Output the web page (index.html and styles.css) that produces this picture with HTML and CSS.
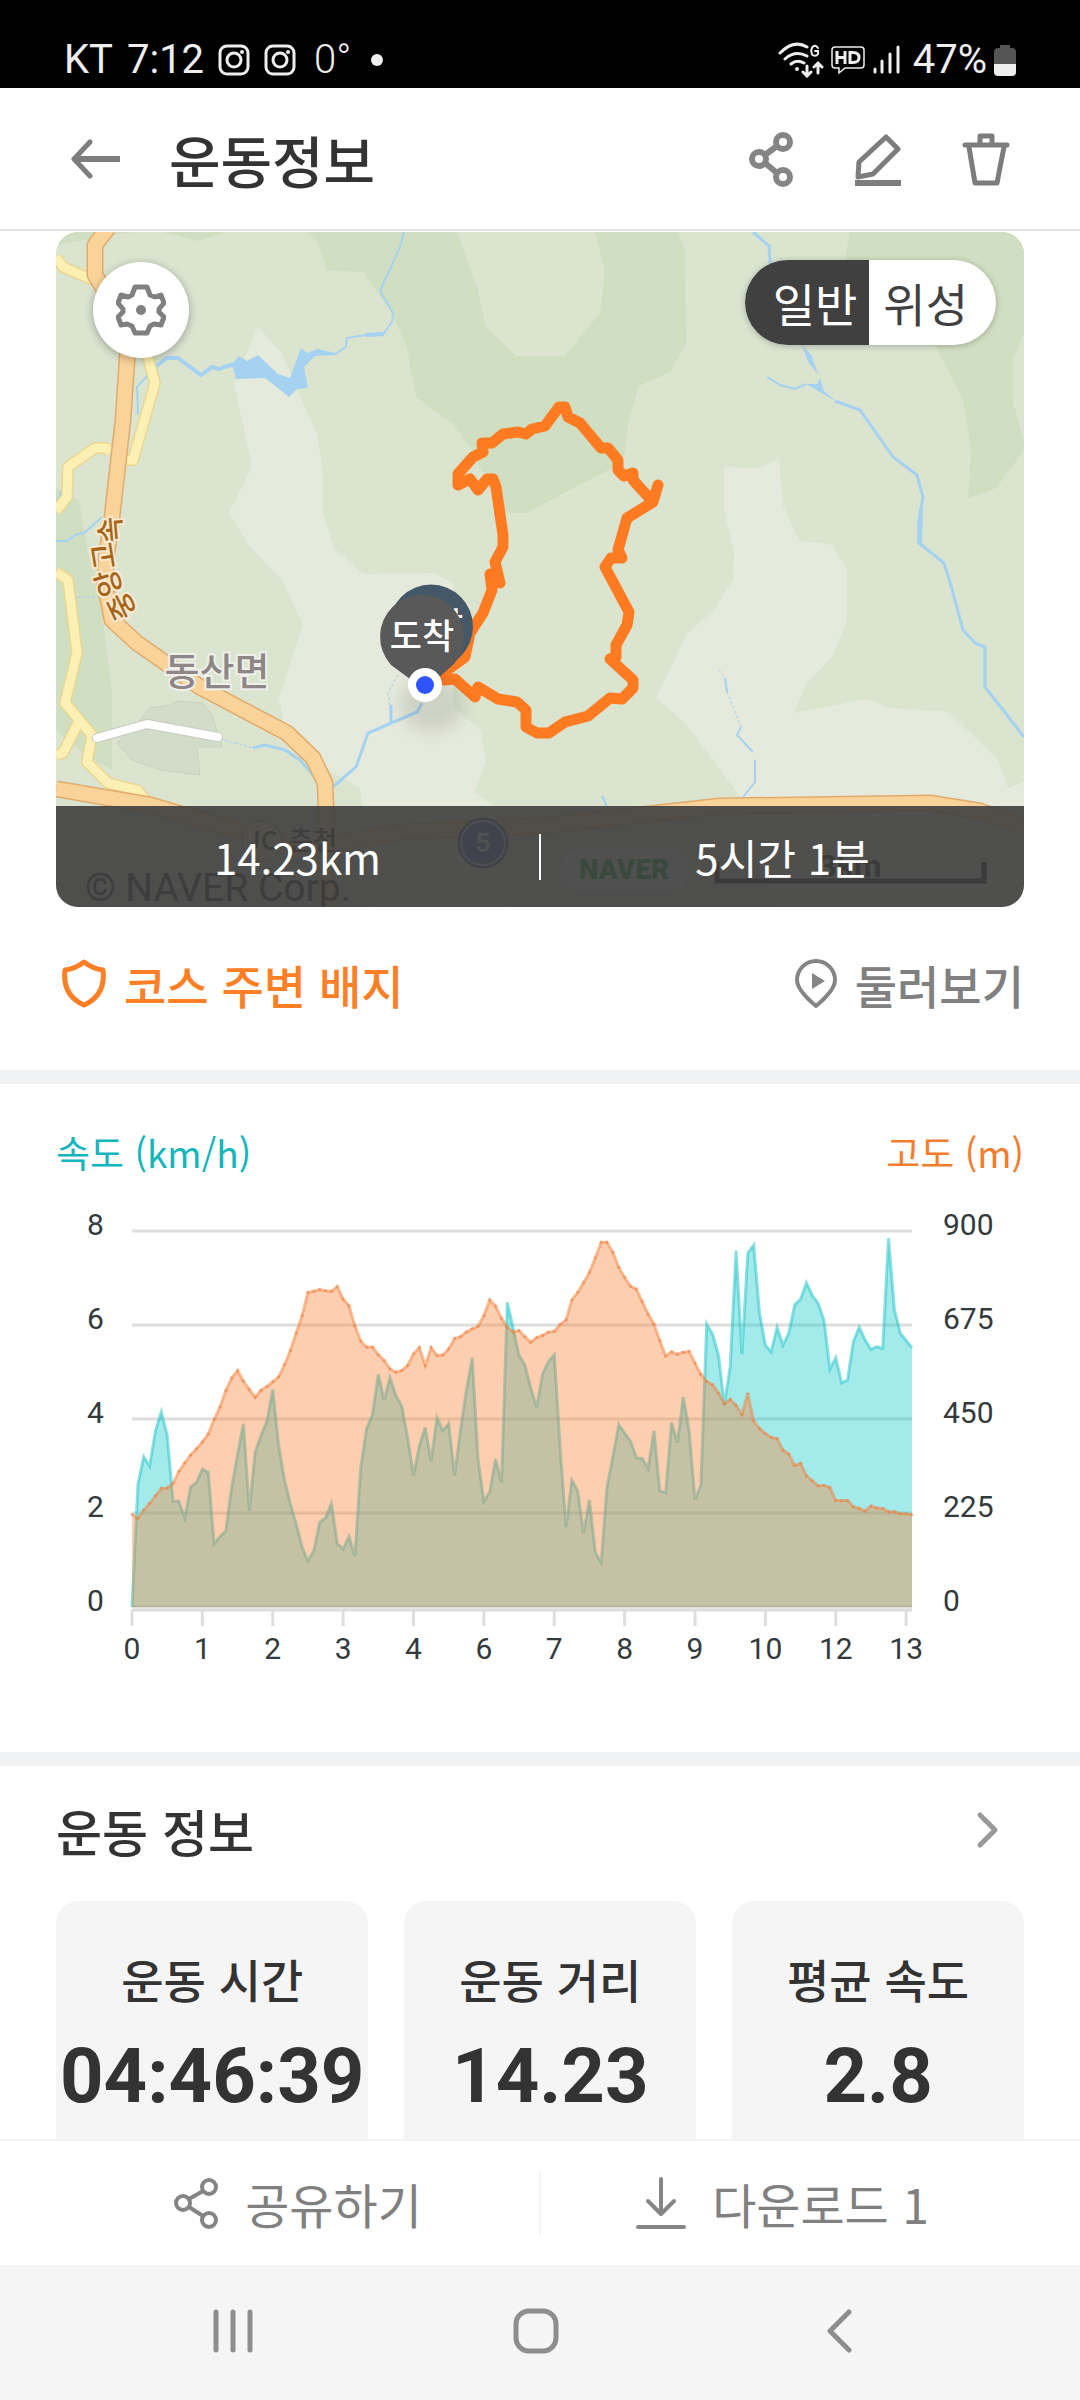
FILE: index.html
```html
<!DOCTYPE html>
<html lang="ko">
<head>
<meta charset="UTF-8">
<meta name="viewport" content="width=device-width, initial-scale=1.0">
<title>운동정보</title>
<link rel="stylesheet" href="styles.css">
</head>
<body>
<div class="status-bar">
    <div class="status-left">
        <span>KT</span>
        <span>7:12</span>
        <svg class="insta" width="32" height="32" viewBox="0 0 32 32">
            <rect x="2" y="2" width="28" height="28" rx="7"/>
            <circle cx="16" cy="16" r="7"/>
            <circle class="dot" cx="24" cy="8" r="2"/>
        </svg>
        <svg class="insta" width="32" height="32" viewBox="0 0 32 32">
            <rect x="2" y="2" width="28" height="28" rx="7"/>
            <circle cx="16" cy="16" r="7"/>
            <circle class="dot" cx="24" cy="8" r="2"/>
        </svg>
        <span class="temp">0°</span>
        <span class="more-dot"></span>
    </div>
    <div class="status-right">
        <svg width="46" height="36" viewBox="0 0 46 36" fill="none" stroke="#eee" stroke-width="3" stroke-linecap="round">
            <path d="M2 11 Q16 -3 29 5 M7 17 Q17 8 29 14 M13 22 Q19 17 26 21"/>
            <circle cx="19" cy="27" r="2" fill="#eee" stroke="none"/>
            <path d="M29 24 V33 M25 30 L29 34 L33 30 M40 31 V22 M36 25 L40 21 L44 25"/>
            <path d="M40 6 Q37 2 34.500 5 Q32 9 34.500 13 Q38 15 40 12 V9 H37" stroke-width="2"/>
        </svg>
        <svg width="34" height="30" viewBox="0 0 34 30" fill="none" stroke="#eee" stroke-width="1.500">
            <path d="M4 2 H30 Q33 2 33 5 V20 Q33 23 30 23 H14 L8 28 V23 H4 Q1 23 1 20 V5 Q1 2 4 2 Z"/>
            <path d="M6 6 V19 M14 6 V19 M6 12.500 H14 M19 7.500 V17.500 H22 Q28 17.500 28 12.500 Q28 7.500 22 7.500 Z" stroke-width="3"/>
        </svg>
        <svg width="28" height="30" viewBox="0 0 28 30" stroke="#eee" stroke-width="3" stroke-linecap="round">
            <path d="M3 24 V27 M10 16 V27 M18 9 V27 M26 2 V27"/>
        </svg>
        <span class="percent">47%</span>
        <svg width="22" height="32" viewBox="0 0 22 32">
            <path d="M6 1 H16 V4 H19 Q22 5 22 8 V20 H0 V8 Q0 5 3 4 H6 Z" fill="#555"/>
            <path d="M0 20 H22 V28 Q22 32 18 32 H4 Q0 32 0 28 Z" fill="#eee"/>
        </svg>
    </div>
</div>

<header class="header">
    <button class="icon-btn" aria-label="뒤로">
        <svg width="50" height="40" viewBox="0 0 50 40" fill="none" stroke="#7d7d7d" stroke-width="6" stroke-linejoin="round">
            <path d="M20 3 L4 20 L20 37" stroke-linecap="round" stroke-width="5"/>
            <path d="M4 20 H50"/>
        </svg>
    </button>
    <h1>운동정보</h1>
    <button class="icon-btn" aria-label="공유">
        <svg width="46" height="56" viewBox="0 0 46 56" fill="none" stroke="#858585" stroke-width="6">
            <circle cx="35" cy="11" r="7"/>
            <circle cx="11" cy="28" r="7"/>
            <circle cx="35" cy="46" r="7"/>
            <path d="M17 24 L29 15 M17 32 L29 42"/>
        </svg>
    </button>
    <button class="icon-btn" aria-label="편집">
        <svg width="46" height="56" viewBox="0 0 46 56" fill="none" stroke="#7d7d7d" stroke-width="5" stroke-linejoin="round">
            <path d="M31 6 L43 18 L18 43 L3 46 L4 31 Z"/>
            <path d="M0 52 H46" stroke-width="6"/>
        </svg>
    </button>
    <button class="icon-btn" aria-label="삭제">
        <svg width="48" height="56" viewBox="0 0 48 56" fill="none" stroke="#7d7d7d" stroke-width="5" stroke-linejoin="round" stroke-linecap="round">
            <path d="M3 14 H45 M18 13 V5 H30 V13"/>
            <path d="M7 16 L13 52 H35 L42 16"/>
        </svg>
    </button>
</header>

<main>
    <section class="map-box">
        <svg class="map" viewBox="56 232 968 675">
            <rect x="56" y="232" width="968" height="675" fill="#dae4cf"/>
            <!-- forest -->
            <g fill="#d0dec1">
                <path d="M307 232 L318 243 327 270 363 272 392 313 407 348 416 397 452 423 470 447 485 477 507 513 526 513 612 468 625 453 628 422 639 386 670 372 686 344 685 250 678 232 H595 L605 270 600 313 565 356 H516 L486 327 477 287 457 232 Z"/>
                <path d="M850 232 L845 258 934 345 943 360 963 400 971 450 968 498 996 488 1024 450 V442 L1013 402 V358 L1024 333 V232 Z"/>
                <path d="M56 245 L83 240 134 232 H56 Z M163 232 L198 241 227 232 Z"/>
                <path d="M56 488 L79 500 88 553 100 597 112 693 V770 L83 753 56 730 Z"/>
            </g>
            <!-- open land -->
            <g fill="#e6eadc">
                <path d="M258 327 L282 353 300 397 317 433 323 473 V513 L334 548 363 574 433 573 453 583 V707 L480 730 486 760 475 792 493 806 510 907 H370 L362 806 360 788 332 772 300 745 285 730 279 698 303 625 282 580 250 547 229 513 252 467 234 383 Z"/>
                <path d="M724 467 L758 468 779 459 783 506 799 540 832 545 847 570 V620 L832 657 807 683 794 713 867 699 890 708 949 712 998 760 1008 788 1024 782 V907 H775 L740 797 715 762 685 723 656 698 688 633 714 610 733 580 734 553 724 508 Z"/>
            </g>
            <path d="M140 720 L150 708 170 705 177 701 203 703 212 715 222 747 197 747 200 775 160 770 132 760 117 743 Z" fill="#d3dcc8" stroke="#c9d3bd"/>
            <!-- water -->
            <g fill="#a6d2f2">
                <path d="M232 364 L239 356 247 361 258 355 278 374 290 378 301 348 307 353 318 349 335 353 337 355 315 356 304 367 308 388 297 389 289 397 265 378 236 379 Z"/>
                <path d="M802 345 L812 356 818 374 808 362 Z M806 384 L817 384 820 378 824 391 837 402 820 392 Z M919 510 L923 505 922 543 917 543 Z"/>
            </g>
            <g fill="none" stroke="#a6d2f2" stroke-width="2">
                <path d="M138 415 L137 387 155 367 M335 354 L346 347 347 338 366 335 384 333 392 322 393 313 380 291 400 247 404 232"/>
                <path d="M155 367 L167 358 178 358 201 375 212 367 219 369 234 364 M366 335 L384 334" stroke-width="4"/>
                <path d="M56 504 L62 490 M56 541 L67 541 75 535 84 533 102 517"/>
                <path d="M753 232 L769 246 770 262 802 345 M835 401 L860 410 893 457 917 475 923 497 919 520 919 543 944 563 950 582 963 630 975 643 985 647 985 687 1024 737" stroke-width="3"/>
                <path d="M767 377 L780 385 795 389 806 384"/>
                <path d="M725 678 L727 692 M741 727 L737 735 753 752 M755 760 V782 L743 797 M602 796 L607 806"/>
                <path d="M719 670 L725 678 M727 692 L741 727 M398 675 L388 692 391 718 M220 739 L253 748 M77 597 H98" stroke-width="1" stroke-dasharray="3 2"/>
                <path d="M422 703 L417 712 368 733 356 767 333 787 M391 705 V722 M253 748 L265 745 285 750 300 760 313 775" stroke-width="3"/>
            </g>
            <!-- roads -->
            <g fill="none" stroke-linejoin="round">
                <path class="local-edge" d="M56 257 L63 267 95 281 M146 350 L155 383 133 460 H124 M110 453 L107 448 95 448 68 467 67 497 56 511 M56 572 L68 580 77 653 65 703 92 735 87 762 108 783 137 790 148 803 M78 723 L63 753 56 755"/>
                <path class="local-fill" d="M56 257 L63 267 95 281 M146 350 L155 383 133 460 H124 M110 453 L107 448 95 448 68 467 67 497 56 511 M56 572 L68 580 77 653 65 703 92 735 87 762 108 783 137 790 148 803 M78 723 L63 753 56 755"/>
                <path d="M97 738 L147 724 218 737" stroke="#c9c9c3" stroke-width="10" stroke-linecap="round"/>
                <path d="M97 738 L147 724 218 737" stroke="#fff" stroke-width="8" stroke-linecap="round"/>
                <path class="road-edge" d="M56 789 L150 805 230 828 300 850 400 832 540 826 720 806 930 803 980 811 1024 826"/>
                <path class="road-fill" d="M56 789 L150 805 230 828 300 850 400 832 540 826 720 806 930 803 980 811 1024 826"/>
                <path class="road-edge" d="M108 228 L95 245 V275 L129 330 123 420 112 517 106 560 105 585 112 620 137 643 200 687 287 733 313 758 325 783 326 807 V907"/>
                <path class="road-fill" d="M108 228 L95 245 V275 L129 330 123 420 112 517 106 560 105 585 112 620 137 643 200 687 287 733 313 758 325 783 326 807 V907"/>
            </g>
            <g class="road-name">
                <text transform="translate(111 530) rotate(-95)" y="10">속</text>
                <text transform="translate(104 556) rotate(-99)" y="10">고</text>
                <text transform="translate(109 583) rotate(-106)" y="10">앙</text>
                <text transform="translate(122 606) rotate(-116)" y="10">중</text>
            </g>
            <text class="town" x="217" y="685">동산면</text>
            <!-- map badges below the summary bar -->
            <circle cx="262" cy="841" r="20" fill="#f6e6c8" stroke="#a98"/>
            <text class="junction" x="262" y="850">JC</text>
            <text class="junction" x="313" y="850">춘천</text>
            <circle cx="483" cy="843" r="25" fill="#4668c8" stroke="#234"/>
            <circle cx="483" cy="843" r="22" fill="none" stroke="#dde" stroke-width="2"/>
            <text class="route-no" x="483" y="852">5</text>
            <text class="copyright" x="85" y="901">© NAVER Corp.</text>
            <rect x="560" y="848" width="129" height="43" rx="21" fill="#eef2ee"/>
            <text class="naver" x="624" y="879">NAVER</text>
            <text class="scale" x="850" y="877">3km</text>
            <path d="M717 862 V881 H984 V862" fill="none" stroke="#111" stroke-width="5"/>
            <!-- walked track -->
            <polyline class="track" points="443,680 455,679 475,697 478,687 498,699 517,702 526,710 526,727 537,733 549,733 565,722 588,716 610,698 622,699 633,688 633,680 610,659 616,657 616,645 627,625 629,612 605,567 611,558 622,558 618,550 627,518 653,502 658,485 653,502 633,480 633,473 624,476 618,470 618,460 608,448 601,448 580,423 568,417 565,407 559,407 545,426 532,429 526,434 518,432 503,434 492,443 482,443 483,452 473,457 458,474 458,485 470,479 478,490 487,479 493,479 496,487 503,535 503,547 495,562 500,583 490,574 492,590 483,613 470,633 465,657 443,673"/>
            <ellipse class="pin-shadow" cx="432" cy="704" rx="32" ry="28"/>
            <path d="M425 690 L401 656 A42 42 0 1 1 461 656 Z" fill="#44586a"/>
            <text class="pin-text" x="431" y="638">출발</text>
            <path d="M425 690 L391 665 A42 42 0 1 1 454 664 Z" fill="#595959"/>
            <text class="pin-text" x="422" y="649">도착</text>
            <circle cx="425" cy="685" r="17" fill="#fff"/>
            <circle cx="425" cy="685" r="9" fill="#2d54ff"/>
        </svg>
        <button class="gear-btn" aria-label="지도 설정">
            <svg width="50" height="52" viewBox="0 0 50 52" fill="none" stroke="#808080" stroke-width="5" stroke-linejoin="round">
                <path d="M19 3 H31 L34 11 L39 13 L45 11 L48 19 L43 25 V28 L48 33 L45 41 L38 40 L34 42 L31 49 H19 L16 42 L11 40 L5 41 L2 33 L7 28 V25 L2 19 L5 11 L12 13 L16 11 Z"/>
                <circle cx="25" cy="26" r="5" fill="#808080" stroke="none"/>
            </svg>
        </button>
        <div class="map-type">
            <button class="on">일반</button>
            <button>위성</button>
        </div>
        <div class="summary">
            <span>14.23km</span>
            <span>5시간 1분</span>
        </div>
    </section>

    <section class="links">
        <a class="badge-link" href="#">
            <svg width="44" height="50" viewBox="0 0 44 50" fill="none" stroke="#ff7f27" stroke-width="5" stroke-linejoin="round">
                <path d="M22 3 Q31 10 41 11 Q44 36 22 46 Q0 36 3 11 Q13 10 22 3 Z"/>
            </svg>
            코스 주변 배지
        </a>
        <a class="look-link" href="#">
            <svg width="42" height="50" viewBox="0 0 42 50" fill="none" stroke="#858585" stroke-width="4" stroke-linejoin="round">
                <path d="M21 47 Q2 31 2 21 A19 19 0 0 1 40 21 Q40 31 21 47 Z"/>
                <path d="M17 14 L30 22 L17 30 Z" fill="#858585" stroke="none"/>
            </svg>
            둘러보기
        </a>
    </section>

    <section class="chart-box">
        <div class="chart-titles">
            <span class="speed-title">속도 (km/h)</span>
            <span class="alt-title">고도 (m)</span>
        </div>
        <svg class="chart" id="chart" viewBox="0 0 968 480"></svg>
    </section>

    <section class="info">
        <div class="info-head">
            <h2>운동 정보</h2>
            <button class="icon-btn" aria-label="더보기">
                <svg width="24" height="38" viewBox="0 0 24 38" fill="none" stroke="#999" stroke-width="5" stroke-linecap="round" stroke-linejoin="round">
                    <path d="M4 4 L19 19 L4 34"/>
                </svg>
            </button>
        </div>
        <div class="cards">
            <div class="card">
                <span>운동 시간</span>
                <strong>04:46:39</strong>
            </div>
            <div class="card">
                <span>운동 거리</span>
                <strong>14.23</strong>
            </div>
            <div class="card">
                <span>평균 속도</span>
                <strong>2.8</strong>
            </div>
        </div>
    </section>
</main>

<div class="actions">
    <button>
        <svg width="46" height="52" viewBox="0 0 46 52" fill="none" stroke="#858585" stroke-width="4">
            <circle cx="36" cy="10" r="7"/>
            <circle cx="10" cy="26" r="7"/>
            <circle cx="36" cy="43" r="7"/>
            <path d="M16 22 L30 14 M16 30 L30 39"/>
        </svg>
        공유하기
    </button>
    <button class="download">
        <svg width="50" height="52" viewBox="0 0 50 52" fill="none" stroke="#858585" stroke-width="4" stroke-linecap="round" stroke-linejoin="round">
            <path d="M25 2 V36 M12 24 L25 37 L38 24 M2 50 H48"/>
        </svg>
        다운로드 1
    </button>
</div>

<nav class="nav-bar">
    <button aria-label="최근 앱">
        <svg width="42" height="44" viewBox="0 0 42 44" stroke="#8e8e8e" stroke-width="5" stroke-linecap="round">
            <path d="M4 3 V41 M21 3 V41 M38 3 V41"/>
        </svg>
    </button>
    <button aria-label="홈">
        <svg width="46" height="46" viewBox="0 0 46 46" fill="none" stroke="#8e8e8e" stroke-width="5">
            <rect x="3" y="3" width="40" height="40" rx="13"/>
        </svg>
    </button>
    <button aria-label="뒤로">
        <svg width="28" height="44" viewBox="0 0 28 44" fill="none" stroke="#8e8e8e" stroke-width="5" stroke-linecap="round" stroke-linejoin="round">
            <path d="M24 3 L5 22 L24 41"/>
        </svg>
    </button>
</nav>
<script src="chart.js"></script>
</body>
</html>
```

FILE: styles.css
```css
* {
    padding: 0;
    margin: 0;
    box-sizing: border-box;
}
body {
    display: flex;
    flex-direction: column;
    height: 100vh;
    background: #fff;
    color: #333;
    font-family: "Noto Sans CJK KR", sans-serif;
}
svg {
    display: block;
    flex-shrink: 0;
}
button {
    border: none;
    background: none;
    color: inherit;
    font: inherit;
    cursor: pointer;
}
a {
    text-decoration: none;
}
.status-bar {
    display: flex;
    justify-content: space-between;
    padding: 32px 64px 0;
    height: 88px;
    flex-shrink: 0;
    background: #000;
    color: #eee;
    font-family: Roboto, sans-serif;
    font-size: 40px;
    line-height: 56px;
}
.status-left, .status-right {
    display: flex;
    align-items: center;
    height: 56px;
    gap: 14px;
}
.status-right {
    gap: 7px;
}
.insta {
    fill: none;
    stroke: #eee;
    stroke-width: 3;
}
.insta .dot {
    fill: #eee;
    stroke: none;
}
.temp {
    margin-left: 4px;
    font-weight: 300;
}
.more-dot {
    width: 12px;
    height: 12px;
    margin-left: 6px;
    border-radius: 50%;
    background: #eee;
}
.percent {
    margin-left: 6px;
}
.header {
    display: flex;
    align-items: center;
    gap: 61px;
    height: 143px;
    flex-shrink: 0;
    padding: 0 70px;
    border-bottom: 2px solid #e3e3e3;
}
.header h1 {
    flex: 1;
    margin-left: -12px;
    font-size: 56px;
    font-weight: 500;
    line-height: 72px;
}
.icon-btn {
    display: flex;
    align-items: center;
}
main {
    flex: 1;
    min-height: 0;
    overflow: hidden;
}
.map-box {
    position: relative;
    margin: 1px 56px 0;
    border-radius: 22px;
    overflow: hidden;
}
.map {
    width: 100%;
}
.local-edge {
    stroke: #e9d792;
    stroke-width: 12px;
}
.local-fill {
    stroke: #fdf0b4;
    stroke-width: 9px;
}
.road-edge {
    stroke: #e2ab6c;
    stroke-width: 17px;
}
.road-fill {
    stroke: #f9d399;
    stroke-width: 14px;
}
.road-name {
    font-size: 29px;
    font-weight: 500;
    fill: #a5651a;
    stroke: #fbe8cd;
    stroke-width: 4px;
    paint-order: stroke;
    text-anchor: middle;
}
.town {
    font-size: 38px;
    font-weight: 500;
    fill: #8f8787;
    stroke: #f0f0ea;
    stroke-width: 4px;
    paint-order: stroke;
    text-anchor: middle;
}
.junction {
    font-size: 26px;
    font-weight: 500;
    fill: #333;
    text-anchor: middle;
}
.route-no {
    font: bold 26px Roboto, sans-serif;
    fill: #fff;
    text-anchor: middle;
}
.copyright {
    font: 39px Roboto, sans-serif;
    fill: #222;
}
.naver {
    font: 900 28px Roboto, sans-serif;
    fill: #00a52c;
    text-anchor: middle;
}
.scale {
    font: bold 32px Roboto, sans-serif;
    fill: #111;
    text-anchor: middle;
}
.track {
    fill: none;
    stroke: #ff7b22;
    stroke-width: 11px;
    stroke-linejoin: round;
    stroke-linecap: round;
}
.pin-shadow {
    fill: rgba(0, 0, 0, 0.1);
    filter: blur(8px);
}
.pin-text {
    font-size: 35px;
    font-weight: 500;
    fill: #fff;
    text-anchor: middle;
}
.gear-btn {
    position: absolute;
    top: 30px;
    left: 37px;
    display: flex;
    align-items: center;
    justify-content: center;
    width: 96px;
    height: 96px;
    border-radius: 50%;
    background: #fff;
    box-shadow: 0 2px 8px rgba(0, 0, 0, 0.3);
}
.map-type {
    position: absolute;
    top: 28px;
    right: 28px;
    display: flex;
    border-radius: 43px;
    overflow: hidden;
    background: #fff;
    box-shadow: 0 1px 6px rgba(0, 0, 0, 0.25);
}
.map-type button {
    padding: 0 28px 0 14px;
    font-size: 46px;
    line-height: 85px;
    color: #404040;
}
.map-type .on {
    padding: 0 12px 0 28px;
    background: #404040;
    color: #fff;
}
.summary {
    position: absolute;
    left: 0;
    right: 0;
    bottom: 0;
    display: flex;
    align-items: center;
    height: 101px;
    background: rgba(64, 64, 64, 0.91);
    color: #fff;
    font-size: 42px;
    line-height: 46px;
    text-align: center;
}
.summary span {
    flex: 1;
}
.summary span + span {
    border-left: 2px solid #fff;
}
.links {
    display: flex;
    justify-content: space-between;
    padding: 49px 56px 58px;
    border-bottom: 14px solid #f1f2f4;
    font-size: 46px;
    font-weight: 500;
    line-height: 56px;
}
.links a {
    display: flex;
    align-items: center;
    gap: 18px;
}
.badge-link {
    padding-left: 6px;
    color: #ff7f27;
}
.look-link {
    color: #808080;
}
.chart-box {
    padding: 40px 56px 72px;
    border-bottom: 14px solid #f1f2f4;
}
.chart-titles {
    display: flex;
    justify-content: space-between;
    margin-bottom: 20px;
    font-size: 37px;
    line-height: 56px;
}
.speed-title {
    color: #14b5bd;
}
.alt-title {
    color: #f47c2c;
}
.chart {
    width: 100%;
    font-family: Roboto, sans-serif;
    font-size: 30px;
    fill: #333a3d;
}
.grid-line {
    stroke: #dedede;
    stroke-width: 3px;
}
.x-label {
    text-anchor: middle;
}
.speed-area {
    fill: rgba(0, 196, 200, 0.36);
}
.alt-area {
    fill: rgba(253, 126, 50, 0.38);
}
.speed-line, .alt-line {
    fill: none;
    stroke-width: 3px;
}
.speed-line {
    stroke: rgba(30, 195, 200, 0.5);
}
.alt-line {
    stroke: rgba(245, 130, 60, 0.5);
}
.alt-dot {
    fill: rgba(240, 120, 50, 0.5);
}
.info {
    padding: 0 56px;
}
.info-head {
    display: flex;
    align-items: center;
    justify-content: space-between;
    height: 128px;
    margin-bottom: 7px;
    padding-right: 24px;
}
.info-head h2 {
    font-size: 50px;
    font-weight: 500;
}
.cards {
    display: grid;
    grid-template-columns: repeat(3, 1fr);
    gap: 36px;
}
.card {
    display: flex;
    flex-direction: column;
    align-items: center;
    gap: 28px;
    padding: 47px 4px 80px;
    border-radius: 22px;
    background: #f5f5f5;
}
.card span {
    font-size: 46px;
    font-weight: 500;
    line-height: 60px;
}
.card strong {
    font-family: Roboto, sans-serif;
    font-size: 76px;
    font-weight: 700;
    line-height: 80px;
}
.actions {
    display: flex;
    align-items: center;
    height: 126px;
    flex-shrink: 0;
    padding: 0 56px;
    border-top: 2px solid #f3f3f3;
    color: #808080;
    font-size: 48px;
    line-height: 64px;
}
.actions button {
    flex: 1;
    display: flex;
    align-items: center;
    justify-content: center;
    gap: 26px;
}
.actions .download {
    border-left: 2px solid #f3f3f3;
}
.nav-bar {
    display: flex;
    align-items: center;
    height: 135px;
    flex-shrink: 0;
    padding: 0 90px 3px 82px;
    background: #f5f5f5;
}
.nav-bar button {
    flex: 1;
    display: flex;
    justify-content: center;
}
```

FILE: chart.js
```js
const speed = [
    0, 2.6, 3.2, 3, 3.75, 4.15, 3.65, 2.25, 2.25, 1.9, 2.55, 2.65,
    2.93, 2.87, 1.35, 1.5, 1.62, 2.55, 3.25, 3.9, 2.05, 3.3, 3.65, 3.95,
    4.63, 3.45, 2.7, 2.2, 1.77, 1.28, 0.98, 1.2, 1.8, 1.9, 2.2, 1.35,
    1.23, 1.5, 1.08, 2.95, 3.8, 4.1, 4.95, 4.4, 4.88, 4.5, 4.27, 3.6,
    2.8, 3.43, 3.82, 3.1, 4.03, 3.75, 3.9, 2.8, 3.75, 4.6, 5.3, 3.15,
    2.25, 2.45, 3.15, 2.65, 6.48, 5.93, 5.35, 5.15, 4.65, 4.25, 4.95, 5.22,
    5.37, 3.4, 1.7, 2.7, 2.47, 1.57, 2.28, 1.17, 0.95, 2.55, 3.2, 3.88,
    3.7, 3.53, 3.17, 3.16, 2.95, 3.75, 2.47, 2.43, 3.93, 3.5, 4.47, 3.75,
    2.28, 2.6, 6.02, 5.8, 5.36, 4.3, 5.12, 7.58, 5.38, 7.53, 7.7, 6.25,
    5.57, 5.43, 5.95, 5.57, 5.83, 6.43, 6.55, 6.9, 6.63, 6.46, 6.1, 5.06,
    5.3, 4.77, 4.83, 5.65, 5.95, 5.68, 5.48, 5.54, 5.5, 7.85, 6.33, 5.83,
    5.67, 5.52
];
const altitude = [
    222, 212, 232, 248, 266, 284, 285, 296, 325, 345, 364, 379,
    395, 414, 449, 479, 518, 548, 566, 541, 521, 502, 519, 528,
    539, 551, 580, 614, 656, 698, 753, 756, 760, 757, 756, 767,
    737, 721, 673, 637, 622, 622, 604, 590, 570, 562, 566, 578,
    606, 621, 578, 621, 602, 603, 618, 643, 647, 658, 666, 672,
    698, 735, 720, 691, 669, 658, 662, 647, 634, 645, 650, 658,
    660, 676, 687, 735, 753, 777, 801, 836, 873, 873, 849, 813,
    789, 768, 761, 731, 701, 677, 638, 601, 611, 605, 610, 612,
    584, 557, 540, 532, 512, 487, 497, 483, 461, 511, 446, 427,
    415, 406, 403, 375, 366, 339, 344, 314, 302, 290, 291, 286,
    255, 255, 255, 240, 236, 230, 242, 237, 236, 228, 228, 223,
    223, 221
];
const km = [0, 1, 2, 3, 4, 6, 7, 8, 9, 10, 12, 13];

const left = 76, right = 856, top0 = 31, bottom = 407;
const step = (right - left) / (speed.length - 1);
const x = i => left + i * step;
const y = (v, max) => bottom - v / max * (bottom - top0);
const points = (data, max) => data.map((v, i) => `${x(i).toFixed(1)},${y(v, max).toFixed(1)}`).join(" ");

let out = "";

// horizontal grid with both scales
for (let i = 0; i <= 4; i++) {
    const gy = bottom - i * 94;
    out += `<line class="grid-line" x1="${left}" y1="${gy}" x2="${right}" y2="${gy}"/>`;
    out += `<text x="31" y="${gy + 4}">${i * 2}</text>`;
    out += `<text x="887" y="${gy + 4}">${i * 225}</text>`;
}

// x axis
out += `<line class="grid-line" x1="${left}" y1="410" x2="${right}" y2="410"/>`;
km.forEach((label, i) => {
    const tx = x(i * 12);
    out += `<line class="grid-line" x1="${tx}" y1="410" x2="${tx}" y2="426"/>`;
    out += `<text class="x-label" x="${tx}" y="459">${label}</text>`;
});

// areas
[["speed", speed, 8], ["alt", altitude, 900]].forEach(([name, data, max]) => {
    const p = points(data, max);
    out += `<polygon class="${name}-area" points="${left},${bottom} ${p} ${right},${bottom}"/>`;
    out += `<polyline class="${name}-line" points="${p}"/>`;
});
altitude.forEach((v, i) => {
    out += `<circle class="alt-dot" cx="${x(i)}" cy="${y(v, 900)}" r="1.5"/>`;
});

document.getElementById("chart").innerHTML = out;
```
